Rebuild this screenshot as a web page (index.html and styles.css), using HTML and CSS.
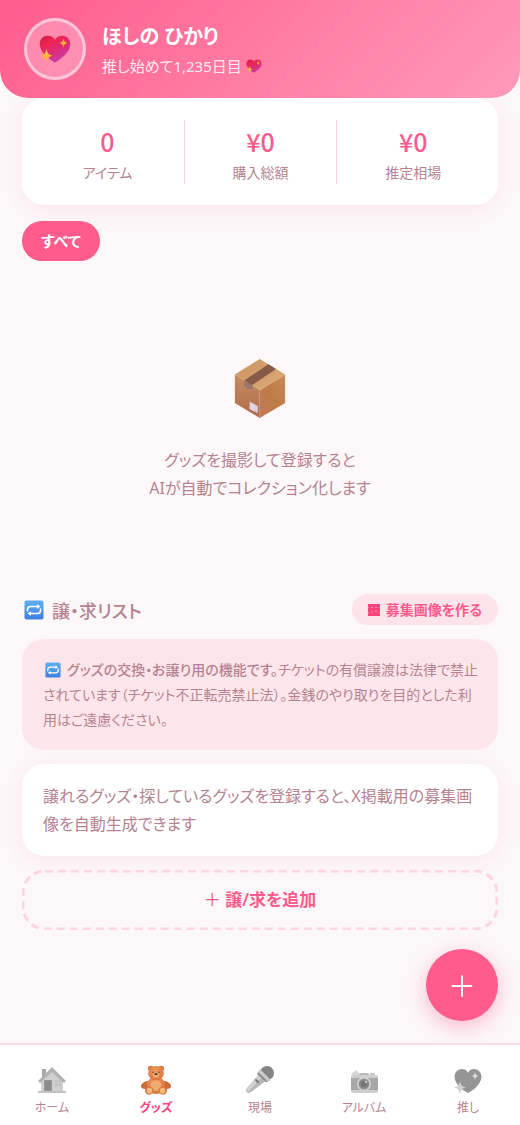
FILE: index.html
```html
<!DOCTYPE html>
<html lang="ja">
<head>
  <meta charset="UTF-8">
  <meta name="viewport" content="width=device-width, initial-scale=1.0">
  <title>グッズ</title>
  <link rel="stylesheet" href="styles.css">
</head>
<body>

<!-- アイコン定義 -->
<svg class="defs" width="0" height="0" aria-hidden="true">
  <defs>
    <linearGradient id="heart-fill" x1="0" y1="0" x2="0.6" y2="1">
      <stop offset="0" stop-color="#c91f48"/>
      <stop offset="0.3" stop-color="#ee2350"/>
      <stop offset="0.6" stop-color="#e02a70"/>
      <stop offset="1" stop-color="#c83ea8"/>
    </linearGradient>
    <linearGradient id="repeat-fill" x1="0" y1="0" x2="0" y2="1">
      <stop offset="0" stop-color="#5fb0f4"/>
      <stop offset="1" stop-color="#3f7fe0"/>
    </linearGradient>
    <linearGradient id="box-top" x1="0" y1="0" x2="1" y2="1">
      <stop offset="0" stop-color="#c99461"/>
      <stop offset="1" stop-color="#dfaa79"/>
    </linearGradient>
    <linearGradient id="box-left" x1="0" y1="0" x2="0" y2="1">
      <stop offset="0" stop-color="#c48c60"/>
      <stop offset="1" stop-color="#b06b4b"/>
    </linearGradient>
    <linearGradient id="box-right" x1="1" y1="0" x2="0" y2="1">
      <stop offset="0" stop-color="#c98b58"/>
      <stop offset="0.5" stop-color="#be7b45"/>
      <stop offset="1" stop-color="#c17a58"/>
    </linearGradient>
    <radialGradient id="bear-fill" cx="0.45" cy="0.35" r="0.7">
      <stop offset="0" stop-color="#ee9c60"/>
      <stop offset="1" stop-color="#d9713f"/>
    </radialGradient>
  </defs>
  <symbol id="icon-heart" viewBox="0 0 32 28">
    <path d="M16 27.500C12 25 1 18.500 0.800 9.500C0.700 4 4.500 0.800 8.700 0.800C12 0.800 14.500 2.300 16 4.800C17.500 2.300 20 0.800 23.300 0.800C27.500 0.800 31.300 4 31.200 9.500C31 18.500 20 25 16 27.500Z" fill="url(#heart-fill)"/>
    <path d="M24.500 3.500C25 6.200 25.800 7.200 28.300 8C25.800 8.800 25 9.800 24.500 12.500C24 9.800 23.200 8.800 20.700 8C23.200 7.200 24 6.200 24.500 3.500Z" fill="#ffb02e"/>
    <path d="M7.500 13.500C8.400 18.200 9.500 19.600 13.500 20.700C9.500 21.800 8.400 23.200 7.500 27.500C6.600 23.200 5.500 21.800 1.500 20.700C5.500 19.600 6.600 18.200 7.500 13.500Z" fill="#ffb636"/>
  </symbol>
  <symbol id="icon-repeat" viewBox="0 0 20 20">
    <rect x="0.500" y="0.500" width="19" height="19" rx="2" fill="url(#repeat-fill)"/>
    <path d="M3.500 11V9.500Q3.500 6.500 6.500 6.500H14M16.500 9V10.500Q16.500 13.500 13.500 13.500H6" fill="none" stroke="#fff" stroke-width="1.600" stroke-linecap="round"/>
    <path d="M13 4.300L16.500 6.500L13 8.700ZM7 11.300L3.500 13.500L7 15.700Z" fill="#fff"/>
  </symbol>
</svg>

<header class="header">
  <div class="avatar">
    <svg class="avatar-icon" aria-hidden="true"><use href="#icon-heart"/></svg>
  </div>
  <div class="profile">
    <h1 class="profile-name">ほしの ひかり</h1>
    <p class="profile-days">推し始めて1,235日目<svg class="days-icon" aria-hidden="true"><use href="#icon-heart"/></svg></p>
  </div>
</header>

<main class="main">
  <section class="stats">
    <div class="stat">
      <div class="stat-value">0</div>
      <div class="stat-label">アイテム</div>
    </div>
    <div class="stat">
      <div class="stat-value">¥0</div>
      <div class="stat-label">購入総額</div>
    </div>
    <div class="stat">
      <div class="stat-value">¥0</div>
      <div class="stat-label">推定相場</div>
    </div>
  </section>

  <div class="filters">
    <button class="chip" type="button">すべて</button>
  </div>

  <section class="empty">
    <svg class="empty-icon" viewBox="0 0 152 176" aria-hidden="true">
      <path d="M75 0L151 46L75 93L1 46Z" fill="url(#box-top)"/>
      <path d="M1 46L75 93V176L1 131Z" fill="url(#box-left)"/>
      <path d="M151 46L75 93V176L151 131Z" fill="url(#box-right)"/>
      <path d="M75 93L151 46" fill="none" stroke="#e0ae80" stroke-width="2"/>
      <path d="M101 16L124 30L52 78L29 64Z" fill="#875b48"/>
      <path d="M29 64L52 78V92L46 88L40 91L36 84L29 80Z" fill="#94766b"/>
      <path d="M45 127L69 140V162L45 149Z" fill="#e2d3e6"/>
      <path d="M59 153L66 157V160L59 156Z" fill="#b9a0bd"/>
    </svg>
    <p class="empty-text">グッズを撮影して登録すると<br>AIが自動でコレクション化します</p>
  </section>

  <section class="trade">
    <div class="trade-head">
      <h2 class="trade-title"><svg class="title-icon" aria-hidden="true"><use href="#icon-repeat"/></svg>譲・求リスト</h2>
      <button class="make-button" type="button">
        <svg class="frame-icon" viewBox="0 0 12 12" aria-hidden="true">
          <path d="M0 0H12V2L11.500 3L12 4V8L11.500 9L12 10V12H0V10L0.500 9L0 8V4L0.500 3L0 2Z" fill="#f9437a"/>
          <path d="M2.500 3H5V4H2.500ZM7 3H9.500V4H7ZM2.500 8.500L4 6.500L5 8.500ZM6.500 8L8 6L9.500 8Z" fill="#fb8fb0"/>
        </svg>募集画像を作る
      </button>
    </div>
    <p class="note"><svg class="note-icon" aria-hidden="true"><use href="#icon-repeat"/></svg><strong>グッズの交換・お譲り用の機能です。</strong>チケットの有償譲渡は法律で禁止されています（チケット不正転売禁止法）。金銭のやり取りを目的とした利用はご遠慮ください。</p>
    <p class="guide">譲れるグッズ・探しているグッズを登録すると、X掲載用の募集画像を自動生成できます</p>
    <button class="add-button" type="button">
      <svg class="add-outline" aria-hidden="true"><rect x="1" y="1" rx="22"/></svg>
      <span class="plus">＋</span> 譲/求を追加
    </button>
  </section>
</main>

<button class="fab" type="button" aria-label="グッズを追加">＋</button>

<nav class="tabbar">
  <a class="tab" href="#home">
    <svg class="tab-icon" viewBox="0 0 30 30" aria-hidden="true">
      <path d="M5 4H9V13H5Z" fill="#a5a5a5"/>
      <path d="M4 14L15 4L26 14V27H4Z" fill="#cfcfcf"/>
      <path d="M15 2L29 16L27 18L15 7L3 18L1 16Z" fill="#b2b2b2"/>
      <path d="M7 15H15V26H7Z" fill="#979797"/>
      <path d="M8 16H14V25H8Z" fill="#8c8c8c"/>
      <path d="M18 15H24V21H18Z" fill="#c0c0c0"/>
      <path d="M21 15V21M18 18H24" stroke="#d4d4d4"/>
      <path d="M1 26H29V28H1Z" fill="#c1c1c1"/>
    </svg>
    <span>ホーム</span>
  </a>
  <a class="tab active" href="#goods" aria-current="page">
    <svg class="tab-icon" viewBox="0 0 92 92" aria-hidden="true">
      <circle cx="30" cy="11" r="9" fill="#d97642"/>
      <circle cx="62" cy="11" r="9" fill="#d97642"/>
      <ellipse cx="16" cy="61" rx="17" ry="11" fill="#cf6b3b" transform="rotate(-25 16 61)"/>
      <ellipse cx="76" cy="61" rx="17" ry="11" fill="#cf6b3b" transform="rotate(25 76 61)"/>
      <ellipse cx="46" cy="62" rx="28" ry="27" fill="url(#bear-fill)"/>
      <circle cx="46" cy="63" r="16" fill="#f0ac6c"/>
      <ellipse cx="46" cy="25" rx="24" ry="22" fill="url(#bear-fill)"/>
      <ellipse cx="46" cy="31" rx="10" ry="8" fill="#f0ac70"/>
      <circle cx="37" cy="22" r="2" fill="#5a3428"/>
      <circle cx="55" cy="22" r="2" fill="#5a3428"/>
      <ellipse cx="46" cy="28" rx="5" ry="3" fill="#4d302b"/>
      <circle cx="25" cy="78" r="13" fill="#dc7844"/>
      <circle cx="67" cy="78" r="13" fill="#dc7844"/>
      <ellipse cx="26" cy="79" rx="8" ry="9" fill="#f5bb7a"/>
      <ellipse cx="66" cy="79" rx="8" ry="9" fill="#f5bb7a"/>
    </svg>
    <span>グッズ</span>
  </a>
  <a class="tab" href="#live">
    <svg class="tab-icon" viewBox="0 0 30 30" aria-hidden="true">
      <path d="M15 8L22 15L6 27Q3 29 1.500 27Q0 25.500 2 23Z" fill="#b7b7b7"/>
      <path d="M15 8L18 11L3 27Q1 27 1.500 25L2 23Z" fill="#d1d1d1"/>
      <circle cx="22" cy="8" r="7" fill="#858585"/>
      <path d="M15 4L26 15L23 17L13 7Z" fill="#c9c9c9"/>
      <path d="M13 7L23 17L21 17L12 9Z" fill="#8d8d8d"/>
      <path d="M11 15L13 17" stroke="#777777" stroke-width="2" stroke-linecap="round"/>
    </svg>
    <span>現場</span>
  </a>
  <a class="tab" href="#album">
    <svg class="tab-icon" viewBox="0 0 30 30" aria-hidden="true">
      <path d="M2 10L3 8L7 5L11 9V11Z" fill="#d7d7d7"/>
      <path d="M9 11L11 8H19L21 11Z" fill="#b9b9b9"/>
      <rect x="21" y="8" width="5" height="3" rx="1" fill="#c8c8c8"/>
      <rect x="2" y="10" width="27" height="18" rx="2" fill="#cecece"/>
      <rect x="2" y="13" width="27" height="12" fill="#a8a8a8"/>
      <circle cx="15" cy="19" r="7" fill="#d4d4d4"/>
      <circle cx="15" cy="19" r="5.500" fill="#909090"/>
      <circle cx="15" cy="19" r="3.500" fill="#777777"/>
      <circle cx="17" cy="17" r="1" fill="#dedede"/>
    </svg>
    <span>アルバム</span>
  </a>
  <a class="tab" href="#oshi">
    <svg class="tab-icon" viewBox="0 0 30 30" aria-hidden="true">
      <path d="M15 28C11 26 2 20 1.500 12C1.500 7 5 4 9 4C12 4 14 5.500 15 8C16 5.500 18 4 21 4C25 4 28.500 7 28.500 12C28 20 19 26 15 28Z" fill="#959595"/>
      <path d="M22 7C22.500 9.500 23 10.500 25.500 11C23 11.500 22.500 12.500 22 15C21.500 12.500 21 11.500 18.500 11C21 10.500 21.500 9.500 22 7Z" fill="#dedede"/>
      <path d="M7 16C8 20.500 9 21.500 13 22.500C9 23.500 8 24.500 7 29C6 24.500 5 23.500 1 22.500C5 21.500 6 20.500 7 16Z" fill="#d0d0d0"/>
    </svg>
    <span>推し</span>
  </a>
</nav>

</body>
</html>
```

FILE: styles.css
```css
* {
  box-sizing: border-box;
  margin: 0;
  padding: 0;
}

body {
  font-family: 'Noto Sans', 'Noto Sans CJK JP', sans-serif;
  font-feature-settings: 'palt';
  background-color: #fcf7f9;
  color: #b5838f;
  min-height: 100vh;
}

button {
  font: inherit;
  font-feature-settings: inherit;
  border: none;
  cursor: pointer;
}

.defs {
  position: absolute;
}

/* ヘッダー */
.header {
  position: relative;
  z-index: 1;
  display: flex;
  align-items: center;
  gap: 16px;
  padding: 18px 24px;
  color: #fff;
  background: linear-gradient(135deg, #ff5c8d, #ff9ab8);
  border-radius: 0 0 28px 28px;
}

.avatar {
  display: flex;
  align-items: center;
  justify-content: center;
  width: 62px;
  height: 62px;
  flex-shrink: 0;
  border: 3px solid rgba(255, 255, 255, 0.5);
  border-radius: 50%;
  background-color: rgba(255, 255, 255, 0.25);
}

.avatar-icon {
  width: 32px;
  height: 28px;
}

.profile {
  padding-top: 4px;
}

.profile-name {
  font-size: 20px;
  font-weight: 700;
  line-height: 30px;
}

.profile-days {
  display: flex;
  align-items: center;
  gap: 4px;
  font-size: 15px;
  line-height: 28px;
  color: rgba(255, 255, 255, 0.85);
}

.days-icon {
  width: 16px;
  height: 14px;
}

.main {
  padding: 0 22px 104px;
}

/* 集計カード */
.stats {
  display: grid;
  grid-template-columns: repeat(3, 1fr);
  padding: 22px 9px 21px;
  background-color: #fff;
  border-radius: 22px;
  box-shadow: 0 4px 20px rgba(255, 92, 141, 0.1);
}

.stat {
  text-align: center;
}

.stat + .stat {
  border-left: 1px solid #f8d3df;
}

.stat-value {
  font-family: 'Noto Sans CJK JP', sans-serif;
  font-size: 25px;
  font-weight: 500;
  line-height: 42px;
  color: #f95c8c;
}

.stat-label {
  font-size: 14px;
  line-height: 22px;
}

.filters {
  display: flex;
  gap: 8px;
  padding-top: 16px;
}

.chip {
  padding: 0 19px;
  font-size: 15px;
  font-weight: 700;
  line-height: 40px;
  color: #fff;
  background-color: #ff5c8d;
  border-radius: 20px;
}

/* 空の状態 */
.empty {
  display: flex;
  flex-direction: column;
  align-items: center;
  gap: 28px;
  padding: 98px 0 92px;
}

.empty-icon {
  width: 52px;
  height: 59px;
}

.empty-text {
  font-size: 16px;
  line-height: 28px;
  text-align: center;
}

/* 譲・求リスト */
.trade {
  display: flex;
  flex-direction: column;
  gap: 14px;
}

.trade-head {
  display: flex;
  align-items: center;
  justify-content: space-between;
}

.trade-title {
  display: flex;
  align-items: center;
  gap: 8px;
  padding-left: 2px;
  font-size: 18px;
  font-weight: 500;
}

.title-icon {
  width: 20px;
  height: 20px;
}

.make-button {
  display: flex;
  align-items: center;
  gap: 6px;
  padding: 0 16px;
  font-size: 14px;
  font-weight: 600;
  line-height: 31px;
  color: #f95c8c;
  background-color: #fde4eb;
  border-radius: 16px;
}

.frame-icon {
  width: 12px;
  height: 12px;
}

.note {
  padding: 18px 18px 18px 21px;
  font-size: 14px;
  line-height: 25px;
  background-color: #fde6eb;
  border-radius: 22px;
}

.note strong {
  font-weight: 500;
}

.note-icon {
  width: 16px;
  height: 16px;
  margin: 0 6px 0 2px;
  vertical-align: -3px;
}

.guide {
  padding: 18px 18px 18px 21px;
  font-size: 16px;
  line-height: 28px;
  background-color: #fff;
  border-radius: 22px;
  box-shadow: 0 4px 20px rgba(255, 92, 141, 0.1);
}

.add-button {
  position: relative;
  font-size: 17px;
  font-weight: 600;
  line-height: 60px;
  color: #f95c8c;
  background-color: transparent;
}

.add-outline {
  position: absolute;
  inset: 0;
  width: 100%;
  height: 100%;
}

.add-outline rect {
  width: calc(100% - 2px);
  height: calc(100% - 2px);
  fill: none;
  stroke: #fcd6e1;
  stroke-width: 3px;
  stroke-dasharray: 8px 5px;
}

.plus {
  font-weight: 400;
}

.fab {
  position: fixed;
  right: 22px;
  bottom: 104px;
  width: 72px;
  height: 72px;
  font-size: 28px;
  line-height: 74px;
  color: #fff;
  background-color: #ff5c8d;
  border-radius: 50%;
  box-shadow: 0 6px 20px rgba(255, 92, 141, 0.4);
}

/* 下部ナビ */
.tabbar {
  position: fixed;
  left: 0;
  right: 0;
  bottom: 0;
  display: grid;
  grid-template-columns: repeat(5, 1fr);
  padding: 20px 0 6px;
  background-color: #fff;
  border-top: 2px solid #f9dfe6;
}

.tab {
  display: flex;
  flex-direction: column;
  align-items: center;
  gap: 2px;
  font-size: 12px;
  line-height: 22px;
  color: #b5838f;
  text-decoration: none;
}

.tab-icon {
  width: 30px;
  height: 30px;
}

.tab.active {
  font-weight: 700;
  color: #f9437a;
}
```
